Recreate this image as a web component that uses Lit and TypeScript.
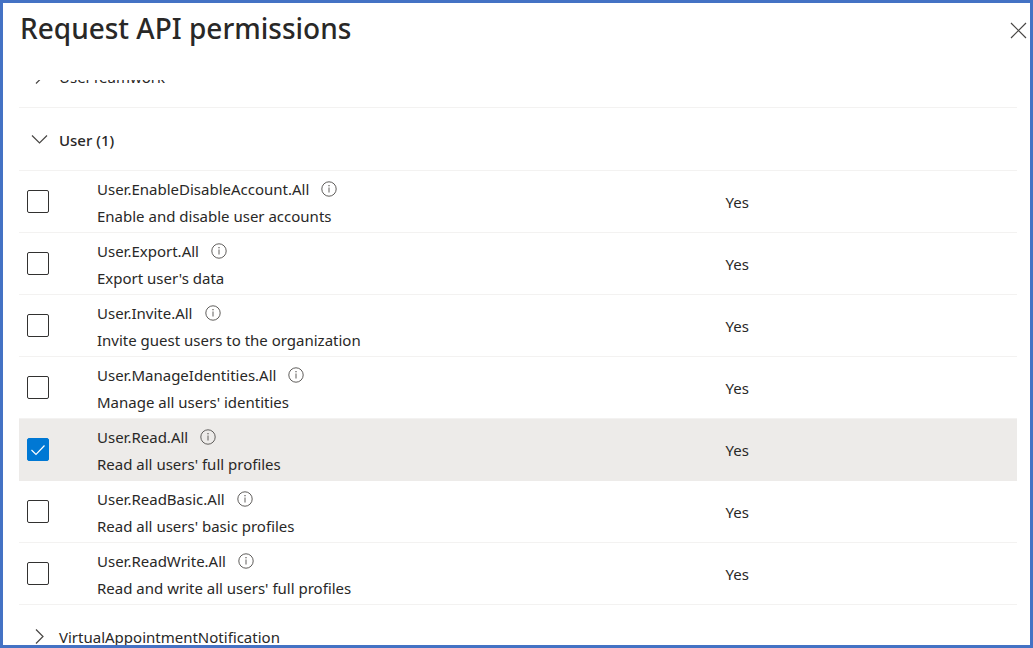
import { LitElement, html, css, svg, nothing } from "lit";
import { customElement, state, query } from "lit/decorators.js";
import { classMap } from "lit/directives/class-map.js";

interface Permission {
  name: string;
  description: string;
  consent: string;
  granted: boolean;
}

interface Group {
  name: string;
  permissions: Permission[];
  open: boolean;
}

const permission = (name: string, description: string, granted = false): Permission => ({
  name,
  description,
  consent: "Yes",
  granted,
});

const chevronRight = svg`<path d="M5 1.5 L12 8.5 L5 15.5" />`;
const chevronDown = svg`<path d="M1 4.5 L8.5 12 L16 4.5" />`;

@customElement("app-root")
export class AppRoot extends LitElement {
  static styles = css`
    :host {
      display: flex;
      flex-direction: column;
      box-sizing: border-box;
      height: 100vh;
      border: 3px solid #4472c4;
      background: #fff;
      color: #292827;
      font-family: "Noto Sans", "Open Sans", sans-serif;
      font-size: 15px;
      line-height: 20px;
    }
    .header {
      display: flex;
      flex: none;
      justify-content: space-between;
      align-items: flex-start;
      height: 77px;
      padding-left: 17px;
      box-sizing: border-box;
    }
    .title {
      margin: 0;
      padding-top: 5px;
      font-size: 28px;
      line-height: 40px;
      font-weight: 500;
    }
    button {
      border: 0;
      padding: 0;
      background: none;
      color: inherit;
      font: inherit;
      text-align: left;
    }
    .close {
      display: flex;
      padding: 19px 3px;
    }
    .scroller {
      flex: 1;
      min-height: 0;
      overflow-y: auto;
      scrollbar-width: none;
      padding: 0 13px 0 16px;
    }
    .list {
      width: 100%;
      table-layout: fixed;
      border-spacing: 0;
    }
    .col-check {
      width: 78px;
    }
    .col-consent {
      width: 30%;
    }
    th,
    td {
      box-sizing: border-box;
      height: 62px;
      padding: 0;
      border-bottom: 1px solid #f3f2f1;
      text-align: left;
      font-weight: 400;
      vertical-align: middle;
    }
    th.group {
      height: 63px;
      padding-top: 1px;
    }
    th.permission {
      padding-top: 2px;
    }
    .selected td,
    .selected th {
      background: #edebe9;
      border-color: #edebe9;
    }
    .toggle {
      display: flex;
      align-items: center;
      gap: 11px;
      width: 100%;
      padding-left: 12px;
    }
    .open {
      font-weight: 500;
    }
    td.check {
      padding-left: 8px;
    }
    .box {
      display: grid;
      width: 22px;
      height: 23px;
    }
    .box input {
      grid-area: 1 / 1;
      appearance: none;
      margin: 0;
      border: 1px solid #323130;
      border-radius: 2px;
      background: #fff;
    }
    .box input:checked {
      border-color: #0078d4;
      background: #0078d4;
    }
    .tick {
      grid-area: 1 / 1;
      place-self: center;
      stroke: #fff;
      pointer-events: none;
    }
    .name {
      display: flex;
      align-items: center;
      gap: 12px;
      margin-bottom: 7px;
    }
    .info {
      display: flex;
      color: #605e5c;
    }
    svg {
      display: block;
      flex: none;
      fill: none;
      stroke: #484644;
      stroke-width: 1.2;
    }
    .info svg {
      stroke: #605e5c;
      stroke-width: 1;
    }
    .info .dot {
      fill: #605e5c;
      stroke: none;
    }
    td.consent {
      padding-left: 8px;
    }
  `;

  @query(".scroller") private scroller!: HTMLElement;

  @state() private groups: Group[] = [
    { name: "UserTeamwork", permissions: [], open: false },
    {
      name: "User",
      open: true,
      permissions: [
        permission("User.EnableDisableAccount.All", "Enable and disable user accounts"),
        permission("User.Export.All", "Export user's data"),
        permission("User.Invite.All", "Invite guest users to the organization"),
        permission("User.ManageIdentities.All", "Manage all users' identities"),
        permission("User.Read.All", "Read all users' full profiles", true),
        permission("User.ReadBasic.All", "Read all users' basic profiles"),
        permission("User.ReadWrite.All", "Read and write all users' full profiles"),
      ],
    },
    { name: "VirtualAppointmentNotification", permissions: [], open: false },
  ];

  firstUpdated() {
    this.scroller.scrollTop = 35;
  }

  private toggleGroup(group: Group) {
    group.open = !group.open;
    this.requestUpdate();
  }

  private togglePermission(item: Permission) {
    item.granted = !item.granted;
    this.requestUpdate();
  }

  private renderPermission(item: Permission) {
    return html`
      <tr class=${classMap({ selected: item.granted })}>
        <td class="check">
          <div class="box">
            <input
              type="checkbox"
              id=${item.name}
              .checked=${item.granted}
              @change=${() => this.togglePermission(item)}
            />
            ${item.granted
              ? html`<svg class="tick" width="16" height="14" viewBox="0 0 16 14">
                  <path d="M1.5 7 L6 11.5 L14.5 2.5" />
                </svg>`
              : nothing}
          </div>
        </td>
        <th class="permission" scope="row">
          <div class="name">
            <label for=${item.name}>${item.name}</label>
            <button class="info" type="button" aria-label="More information">
              <svg width="16" height="16" viewBox="0 0 16 16">
                <circle cx="8" cy="8" r="7.2" />
                <path d="M8 6.5 V11.5" />
                <rect class="dot" x="7.4" y="4" width="1.2" height="1.3" />
              </svg>
            </button>
          </div>
          <div>${item.description}</div>
        </th>
        <td class="consent">${item.consent}</td>
      </tr>
    `;
  }

  private renderGroup(group: Group) {
    const count = group.permissions.filter((item) => item.granted).length;
    return html`
      <tbody>
        <tr>
          <th class="group" colspan="3" scope="rowgroup">
            <button
              class=${classMap({ toggle: true, open: group.open })}
              type="button"
              aria-expanded=${group.open ? "true" : "false"}
              @click=${() => this.toggleGroup(group)}
            >
              <svg width="17" height="17" viewBox="0 0 17 17">${group.open ? chevronDown : chevronRight}</svg>
              <span>${group.name}${count ? ` (${count})` : ""}</span>
            </button>
          </th>
        </tr>
        ${group.open ? group.permissions.map((item) => this.renderPermission(item)) : nothing}
      </tbody>
    `;
  }

  render() {
    return html`
      <header class="header">
        <h1 class="title">Request API permissions</h1>
        <button class="close" type="button" aria-label="Close">
          <svg width="17" height="17" viewBox="0 0 17 17"><path d="M1 1 L16 16 M16 1 L1 16" /></svg>
        </button>
      </header>
      <div class="scroller">
        <table class="list">
          <colgroup>
            <col class="col-check" />
            <col />
            <col class="col-consent" />
          </colgroup>
          ${this.groups.map((group) => this.renderGroup(group))}
        </table>
      </div>
    `;
  }
}
